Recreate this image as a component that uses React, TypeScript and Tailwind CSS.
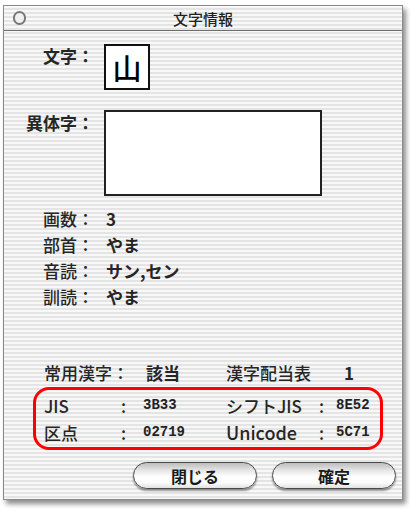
import React from "react";

const stripe =
  "bg-[repeating-linear-gradient(to_bottom,#f8f8f8_0px,#f8f8f8_2px,#e4e4e4_2px,#e4e4e4_4px)]";

function Label({ children, w = "w-[90px]" }: { children: React.ReactNode; w?: string }) {
  return <div className={`${w} shrink-0 text-right`}>{children}</div>;
}

function AquaButton({ children }: { children: React.ReactNode }) {
  return (
    <button className="w-[124px] h-[27px] rounded-full border border-[#4a4a4a] bg-[linear-gradient(to_bottom,#bdbdbd_0%,#e6e6e6_30%,#ffffff_55%,#fbfbfb_80%,#e0e0e0_100%)] shadow-[0_2px_2px_rgba(0,0,0,0.4)] text-[16px] font-bold text-[#1a1a1a] leading-none flex items-center justify-center">
      {children}
    </button>
  );
}

const mono = "font-['Liberation_Mono'] text-[14px] font-bold text-[#222]";

export default function App() {
  return (
    <div
      className="w-[410px] h-[511px] bg-white overflow-hidden pt-[5px] pl-[3px]"
      style={{ fontFamily: '"Noto Sans CJK JP", "Noto Sans", sans-serif' }}
    >
      <div
        className={`w-[400px] h-[495px] border border-[#8a8a8a] ${stripe} shadow-[3px_4px_5px_rgba(0,0,0,0.45)] flex flex-col text-[#262626]`}
      >
        {/* title bar */}
        <div className="h-[25px] shrink-0 border-b border-[#6e6e6e] flex items-center relative">
          <div className="absolute left-[9px] top-[5px] w-[13px] h-[14px] rounded-full border-2 border-[#777] bg-[#f0f0f0]" />
          <div className="flex-1 text-center text-[15px] leading-none font-medium text-[#222]">文字情報</div>
        </div>

        {/* content */}
        <div className="flex-1 flex flex-col text-[17px] font-bold">
          {/* 文字 */}
          <div className="flex items-start mt-[13px]">
            <Label>
              <div className="leading-[26px] mt-[-1px]">文字：</div>
            </Label>
            <div className="ml-[10px] w-[46px] h-[46px] border-2 border-[#111] bg-white flex items-center justify-center text-[29px] leading-none font-medium text-black">
              山
            </div>
          </div>

          {/* 異体字 */}
          <div className="flex items-start mt-[20px]">
            <Label>
              <div className="leading-[26px]">異体字：</div>
            </Label>
            <div className="ml-[10px] w-[218px] h-[86px] border-2 border-[#222] bg-white" />
          </div>

          {/* info rows */}
          <div className="flex flex-col mt-[10px] leading-[26px] font-medium">
            <div className="flex">
              <Label>画数：</Label>
              <div className="ml-[12px] font-bold">3</div>
            </div>
            <div className="flex">
              <Label>部首：</Label>
              <div className="ml-[12px] font-bold">やま</div>
            </div>
            <div className="flex">
              <Label>音読：</Label>
              <div className="ml-[12px] font-bold">サン,セン</div>
            </div>
            <div className="flex">
              <Label>訓読：</Label>
              <div className="ml-[12px] font-bold">やま</div>
            </div>
          </div>

          {/* 常用漢字 */}
          <div className="flex items-center mt-[50px] leading-[26px] pl-[40px] font-medium">
            <div className="w-[102px] shrink-0">常用漢字：</div>
            <div className="w-[80px] shrink-0 font-bold">該当</div>
            <div className="w-[118px] shrink-0">漢字配当表</div>
            <div className="font-bold">1</div>
          </div>

          {/* red box */}
          <div className="mt-[1px] ml-[29px] w-[350px] h-[63px] border-[3px] border-[#ff0000] rounded-[16px] flex flex-col justify-center pl-[8px] leading-[27px] font-medium">
            <div className="flex items-center">
              <div className="w-[77px] shrink-0">JIS</div>
              <div className="w-[22px] shrink-0">:</div>
              <div className={`w-[83px] shrink-0 ${mono}`}>3B33</div>
              <div className="w-[93px] shrink-0">シフトJIS</div>
              <div className="w-[17px] shrink-0">:</div>
              <div className={mono}>8E52</div>
            </div>
            <div className="flex items-center">
              <div className="w-[77px] shrink-0">区点</div>
              <div className="w-[22px] shrink-0">:</div>
              <div className={`w-[83px] shrink-0 ${mono}`}>02719</div>
              <div className="w-[93px] shrink-0 text-[18px]">Unicode</div>
              <div className="w-[17px] shrink-0">:</div>
              <div className={mono}>5C71</div>
            </div>
          </div>

          {/* buttons */}
          <div className="flex mt-[12px] pl-[129px] gap-[15px]">
            <AquaButton>閉じる</AquaButton>
            <AquaButton>確定</AquaButton>
          </div>
        </div>
      </div>
    </div>
  );
}
